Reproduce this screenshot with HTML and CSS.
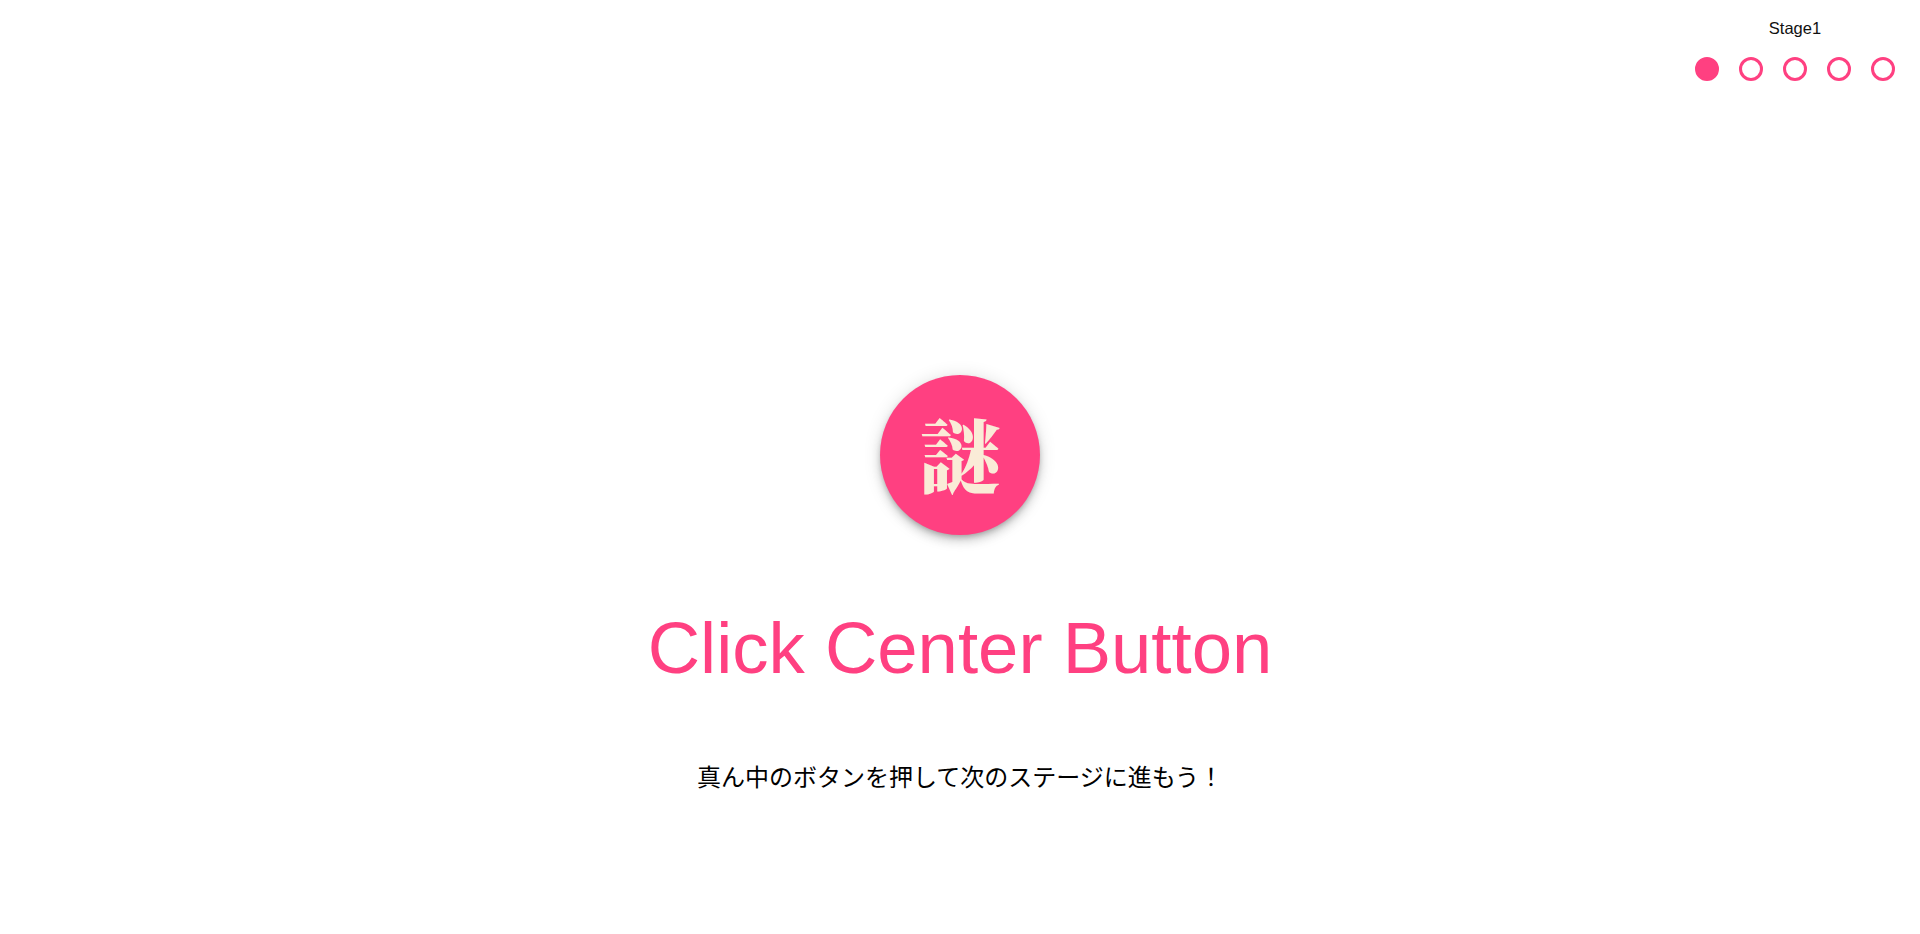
FILE: index.html
```html
<!DOCTYPE html>
<html lang="ja">
<head>
<meta charset="utf-8">
<title>Stage1</title>
<link rel="stylesheet" href="styles.css">
</head>
<body>
<header class="topbar">
  <div class="progress">
    <div class="stage-label">Stage1</div>
    <div class="dots">
      <span class="dot filled"></span>
      <span class="dot"></span>
      <span class="dot"></span>
      <span class="dot"></span>
      <span class="dot"></span>
    </div>
  </div>
</header>
<main class="main">
  <button class="nazo-btn" type="button"><span class="nazo">謎</span></button>
  <h1 class="title">Click Center Button</h1>
  <p class="hint">真ん中のボタンを押して次のステージに進もう！</p>
</main>
</body>
</html>
```
FILE: styles.css
```css
html, body {
  margin: 0;
  padding: 0;
  background: #ffffff;
}
body {
  font-family: "Liberation Sans", "Noto Sans CJK JP", sans-serif;
  color: #000;
  height: 934px;
  overflow: hidden;
}
.topbar {
  display: flex;
  justify-content: flex-end;
  padding: 19px 25px 0 0;
}
.progress {
  display: flex;
  flex-direction: column;
  align-items: center;
  gap: 20px;
}
.stage-label {
  font-size: 16.5px;
  line-height: 18px;
  color: #111;
}
.dots {
  display: flex;
  gap: 20px;
}
.dot {
  width: 24px;
  height: 24px;
  box-sizing: border-box;
  border-radius: 50%;
  border: 3px solid #ff4081;
  background: #fff;
}
.dot.filled {
  background: #ff4081;
}
.main {
  display: flex;
  flex-direction: column;
  align-items: center;
  padding-top: 294px;
}
.nazo-btn {
  width: 160px;
  height: 160px;
  border-radius: 50%;
  border: none;
  padding: 0 0 6px;
  margin: 0;
  background: #ff4081;
  display: flex;
  align-items: center;
  justify-content: center;
  box-shadow: 0 3px 5px -1px rgba(0,0,0,.2), 0 6px 10px 0 rgba(0,0,0,.14), 0 1px 18px 0 rgba(0,0,0,.12);
  cursor: pointer;
}
.nazo {
  font-family: "Noto Serif CJK JP", "Noto Sans CJK JP", serif;
  font-weight: 900;
  font-size: 80px;
  line-height: 1;
  color: #faebd7;
}
.title {
  margin: 71px 0 0;
  font-size: 72.5px;
  line-height: 83px;
  font-weight: 400;
  color: #ff4081;
}
.hint {
  margin: 69px 0 0;
  font-family: "Noto Sans CJK JP", sans-serif;
  font-size: 24px;
  line-height: 36px;
  color: #000;
}
```
